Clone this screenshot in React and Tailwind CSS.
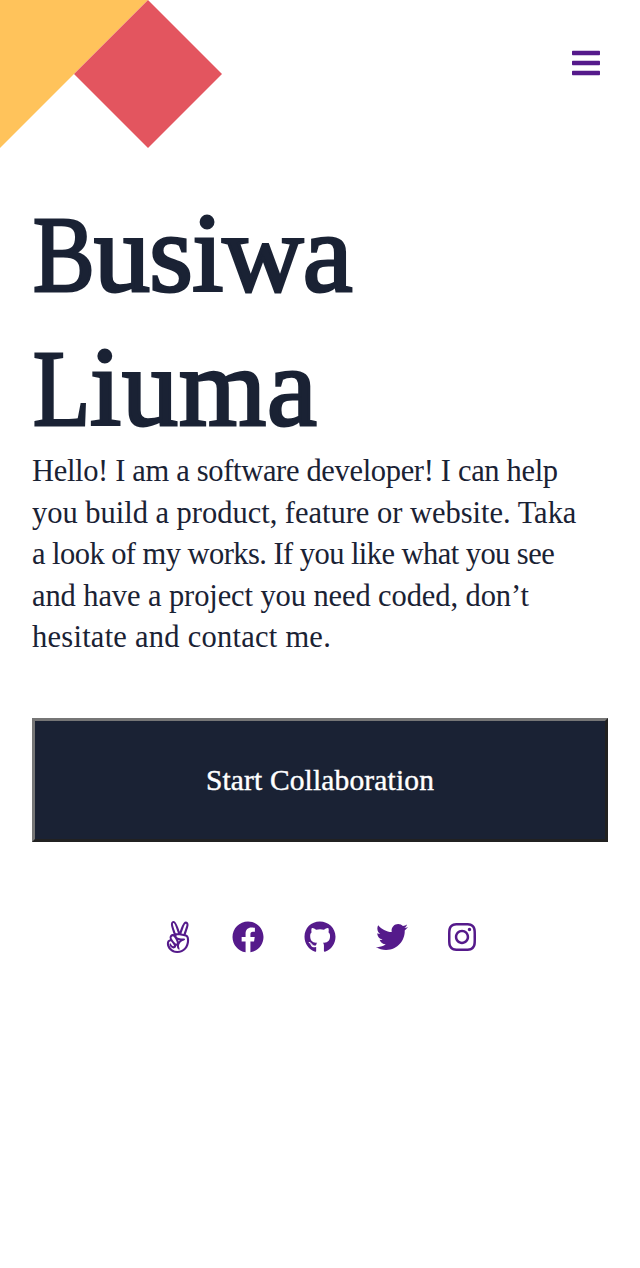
import { FaAngellist, FaBars, FaFacebook, FaGithub, FaInstagram, FaTwitter } from 'react-icons/fa';

const socials = [
  { name: 'AngelList', Icon: FaAngellist, width: 'w-7' },
  { name: 'Facebook', Icon: FaFacebook, width: 'w-8' },
  { name: 'GitHub', Icon: FaGithub, width: 'w-8' },
  { name: 'Twitter', Icon: FaTwitter, width: 'w-8' },
  { name: 'Instagram', Icon: FaInstagram, width: 'w-7' },
];

export default function App() {
  return (
    <div className="flex min-h-[1268px] w-full flex-col bg-white font-['Liberation_Serif',serif] text-[#1a2234]">
      <header className="flex h-[148px] items-start justify-between">
        <svg className="block h-[148px] w-[222px]" viewBox="0 0 222 148" aria-hidden="true">
          <path d="M0 0H148L0 148Z" fill="#ffc35b" />
          <path d="M148 0L222 74L148 148L74 74Z" fill="#e3555f" />
        </svg>
        <button aria-label="Menu" className="mt-[47px] mr-10 text-[#551a8b]">
          <FaBars className="h-8 w-7" />
        </button>
      </header>

      <main className="flex flex-col px-8">
        <h1 className="mt-[38px] text-[112px] leading-[134px] font-normal whitespace-nowrap [-webkit-text-stroke:3px_#1a2234]">
          <span className="block h-[134px] tracking-[-0.7px]">
            <span className="ml-px inline-block w-[61px] origin-left scale-x-[0.85] text-[109px] leading-none">B</span>usiwa
          </span>
          <span className="block h-[134px] tracking-[0.9px]">
            <span className="ml-px inline-block w-[57px] origin-left scale-x-[0.86] text-[109px] leading-none">L</span>iuma
          </span>
        </h1>

        <p className="mt-[-3px] text-[30.5px] leading-[41.5px] whitespace-nowrap">
          <span className="block tracking-[-0.33px]">Hello! I am a software developer! I can help</span>
          <span className="block tracking-[-0.02px]">you build a product, feature or website. Taka</span>
          <span className="block tracking-[-0.55px]">a look of my works. If you like what you see</span>
          <span className="block tracking-[-0.1px]">and have a project you need coded, don’t</span>
          <span className="block tracking-[0.25px]">hesitate and contact me.</span>
        </p>

        <button className="mt-[59.5px] h-[124px] w-full border-[3px] border-t-[#767676] border-r-[#212121] border-b-[#212121] border-l-[#767676] bg-[#1a2234] text-[29.5px] tracking-[0.15px] text-white [-webkit-text-stroke:0.4px_white]">
          Start Collaboration
        </button>
      </main>

      <nav className="mt-[79px] flex justify-center gap-10 text-[#551a8b]">
        {socials.map(({ name, Icon, width }) => (
          <a key={name} aria-label={name}>
            <Icon className={`h-8 ${width}`} />
          </a>
        ))}
      </nav>
    </div>
  );
}
